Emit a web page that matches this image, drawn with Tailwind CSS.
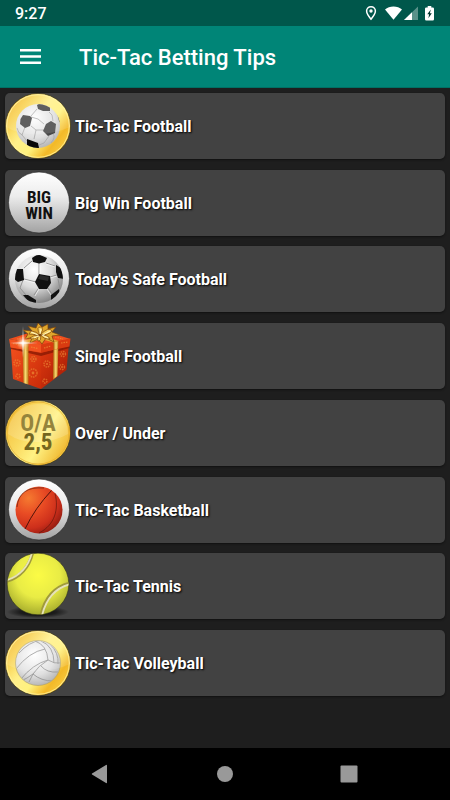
<!DOCTYPE html>
<html lang="en">
<head>
<meta charset="utf-8">
<meta name="viewport" content="width=device-width, initial-scale=1">
<title>Tic-Tac Betting Tips</title>
<script src="https://cdn.jsdelivr.net/npm/@tailwindcss/browser@4"></script>
</head>
<body class="flex min-h-screen flex-col bg-[#1e1e1e] font-['Roboto','Liberation_Sans',sans-serif] text-white">

<!-- Shared gradients and clips -->
<svg class="absolute size-0" aria-hidden="true">
  <defs>
    <linearGradient id="gold" x1="0" y1="0.1" x2="1" y2="0.9">
      <stop offset="0" stop-color="#f0b52c"/><stop offset=".2" stop-color="#f8cf4c"/><stop offset=".42" stop-color="#fff08a"/><stop offset=".6" stop-color="#fff27e"/><stop offset=".78" stop-color="#f3b928"/><stop offset="1" stop-color="#fbd550"/>
    </linearGradient>
    <linearGradient id="goldface" x1="0" y1="0.2" x2="1" y2="0.8">
      <stop offset="0" stop-color="#f3bf3a"/><stop offset=".35" stop-color="#fadb62"/><stop offset=".6" stop-color="#fff284"/><stop offset="1" stop-color="#eeb024"/>
    </linearGradient>
    <linearGradient id="silver" x1="0" y1="0" x2="0" y2="1">
      <stop offset="0" stop-color="#fff"/><stop offset=".4" stop-color="#ececec"/><stop offset="1" stop-color="#a2a2a2"/>
    </linearGradient>
    <radialGradient id="ball" cx=".4" cy=".3" r=".75">
      <stop offset="0" stop-color="#fff"/><stop offset=".5" stop-color="#dcdcdc"/><stop offset="1" stop-color="#7b7b7b"/>
    </radialGradient>
    <radialGradient id="paleball" cx=".42" cy=".32" r=".75">
      <stop offset="0" stop-color="#fff"/><stop offset=".6" stop-color="#e0e0e0"/><stop offset="1" stop-color="#acacac"/>
    </radialGradient>
    <radialGradient id="orange" cx=".28" cy=".25" r=".85">
      <stop offset="0" stop-color="#f57a30"/><stop offset=".4" stop-color="#e84b24"/><stop offset=".75" stop-color="#cd2f1b"/><stop offset="1" stop-color="#8e1a10"/>
    </radialGradient>
    <radialGradient id="lime" cx=".5" cy=".36" r=".65">
      <stop offset="0" stop-color="#fbfb45"/><stop offset=".55" stop-color="#e9ec45"/><stop offset="1" stop-color="#a5ab2c"/>
    </radialGradient>
    <radialGradient id="groundshade">
      <stop offset="0" stop-color="#000" stop-opacity=".9"/><stop offset=".6" stop-color="#000" stop-opacity=".55"/><stop offset="1" stop-color="#000" stop-opacity="0"/>
    </radialGradient>
    <linearGradient id="boxleft" x1="0" y1="0" x2="1" y2="1">
      <stop offset="0" stop-color="#f4511e"/><stop offset="1" stop-color="#c92b08"/>
    </linearGradient>
    <linearGradient id="boxright" x1="0" y1="0" x2="1" y2="1">
      <stop offset="0" stop-color="#e23a10"/><stop offset="1" stop-color="#a01a04"/>
    </linearGradient>
    <linearGradient id="ribbon" x1="0" y1="0" x2="1" y2="0">
      <stop offset="0" stop-color="#b06c10"/><stop offset=".5" stop-color="#f8d870"/><stop offset="1" stop-color="#b87814"/>
    </linearGradient>
    <radialGradient id="glow">
      <stop offset="0" stop-color="#fff"/><stop offset=".35" stop-color="#ffd9b8" stop-opacity=".8"/><stop offset="1" stop-color="#ff9a60" stop-opacity="0"/>
    </radialGradient>
    <clipPath id="clip22"><circle cx="33" cy="33" r="22"/></clipPath>
    <clipPath id="clip24"><circle cx="34" cy="33" r="24"/></clipPath>
    <clipPath id="cliptennis"><circle cx="33" cy="31" r="30.5"/></clipPath>
  </defs>
</svg>

<header>
  <div class="flex h-[26px] items-center justify-between bg-[#00574b] pr-4 pl-[15px]">
    <time class="pt-[2px] text-[16px] leading-6 font-medium">9:27</time>
    <div class="flex items-center">
      <svg class="mr-2 h-4 w-3" viewBox="0 0 12 16" aria-hidden="true"><path d="M6 1.700C3.400 1.700 1.600 3.600 1.600 6.100C1.600 9 6 14.200 6 14.200S10.400 9 10.400 6.100C10.400 3.600 8.600 1.700 6 1.700Z" fill="none" stroke="#fff" stroke-width="1.500"/><circle cx="6" cy="6" r="1.700" fill="#fff"/></svg>
      <svg class="mr-[2px] h-4 w-[17px]" viewBox="0 0 17 16" aria-hidden="true"><path d="M0 4.600C2.300 2.700 5.200 1.600 8.500 1.600S14.700 2.700 17 4.600L8.500 14.800Z" fill="#fff"/></svg>
      <svg class="mr-[7px] h-4 w-[14px]" viewBox="0 0 14 16" aria-hidden="true"><path d="M14 1.500V15H0Z" fill="#fff" fill-opacity=".35"/><path d="M8 7.300V15H0Z" fill="#fff"/></svg>
      <svg class="h-4 w-[9px]" viewBox="0 0 9 16" aria-hidden="true"><path d="M2.700 1h3.600v1.500h1.500Q9 2.500 9 3.700V14.200Q9 15.500 7.800 15.500H1.200Q0 15.500 0 14.200V3.700Q0 2.500 1.200 2.500H2.700Z" fill="#fff"/><path d="M5.800 4.500L2.300 9.300H4.100L3.400 13.200L6.800 8.300H4.900Z" fill="#00352e"/></svg>
    </div>
  </div>
  <div class="flex h-[62px] items-center gap-[35px] border-b border-[#007165] bg-[#008577] pl-[17px]">
    <button type="button" aria-label="Open menu" class="size-[27px]">
      <svg class="size-[27px]" viewBox="0 0 27 27" fill="#fff" aria-hidden="true"><path d="M3 6h21v2.500H3zM3 12.200h21v2.500H3zM3 18.400h21v2.500H3z"/></svg>
    </button>
    <h1 class="pt-[2px] text-[22px] leading-8 font-medium">Tic-Tac Betting Tips</h1>
  </div>
</header>

<main class="flex flex-1 flex-col px-[5px] pt-[5px] pb-[52px]">
  <ul class="flex flex-1 flex-col justify-between gap-2 text-[16px] leading-6 font-bold [text-shadow:1px_1px_2px_#000]">
    <li><a href="#tic-tac-football" class="flex items-center gap-1 rounded-[5px] bg-[#424242] shadow-[0_1px_2px_#111]">
      <svg class="size-[66px] shrink-0" viewBox="0 0 66 66" aria-hidden="true">
        <circle cx="33" cy="33" r="32.600" fill="url(#gold)" stroke="#3a3520" stroke-width=".7"/>
        <circle cx="33" cy="33" r="31.300" fill="none" stroke="#fff3a0" stroke-width=".8"/>
        <circle cx="33" cy="33" r="22" fill="url(#paleball)"/>
        <g clip-path="url(#clip22)">
          <path d="M26 23L32 16M44 19L47 22L48 28M26 33L31 37L39 37M39 31L33 26L26 24M31 37L29 46M44 43L39 50L34 52M20 34L17 42L22 48M17 42Q13 40 12 35M48 41Q51 44 46 50" fill="none" stroke="#a6a6a6" stroke-width=".8"/>
          <g fill="#484848"><path d="M32 12L36 10L45 13L45 18L38 18L33 16Z"/><path d="M18 22L25 23L27 25L25 33L20 35L15 31L15.500 26Z"/><path d="M41 31L46 28L51 31L50 40L43 43L38 38Z"/><path d="M52 20L57 26L56 31L54 28Z"/></g>
          <path d="M22 46L33 50L34 55L29 56L22 53Z" fill="#080808"/>
        </g>
        <path d="M1 34Q15 42 33 41.500Q52 40 65 34V33A32 32 0 0 0 1 33Z" fill="#fff" opacity=".13"/>
      </svg>
      <span class="pt-[2px]">Tic-Tac Football</span></a></li>

    <li><a href="#big-win-football" class="flex items-center gap-1 rounded-[5px] bg-[#424242] shadow-[0_1px_2px_#111]">
      <svg class="size-[66px] shrink-0" viewBox="0 0 66 66" aria-hidden="true">
        <circle cx="34" cy="32.500" r="30.500" fill="url(#silver)" stroke="#222" stroke-width=".6"/>
        <g class="text-[17px] font-bold [text-shadow:none]" font-family="'Roboto Condensed',Roboto,sans-serif" text-anchor="middle" fill="#111"><text x="34" y="33">BIG</text><text x="34" y="49">WIN</text></g>
      </svg>
      <span class="pt-[2px]">Big Win Football</span></a></li>

    <li><a href="#todays-safe-football" class="flex items-center gap-1 rounded-[5px] bg-[#424242] shadow-[0_1px_2px_#111]">
      <svg class="size-[66px] shrink-0" viewBox="0 0 66 66" aria-hidden="true">
        <circle cx="34" cy="32.500" r="30.500" fill="url(#silver)" stroke="#222" stroke-width=".6"/>
        <circle cx="34" cy="33" r="24" fill="url(#ball)"/>
        <g clip-path="url(#clip24)">
          <path d="M27 15L19 22M41 17L50 20M34 28L34 17M31 36L19 33M45 31L52 29M43 42L47 48M33 43L29 49M18 34L15 42L21 49M53 33L55 43" fill="none" stroke="#8d8d8d" stroke-width=".9"/>
          <path d="M28 15.500L20 22.500M41 18L50 21M35 28L35 18M31 37L19 34M45 32L52 30M42 43L46 49M34 43L30 50" fill="none" stroke="#fff" stroke-width=".6"/>
          <g fill="#111"><path d="M27 12L33 8L42 12L40 16L34 17.500L28 16Z"/><path d="M11 23L18 23L19 34L13 36L9 33Z"/><path d="M34 28L45 30L46 37L42 43L34 43L30 36Z"/><path d="M51 19L56 22L59 33L53 32L51 26Z"/><path d="M18 49L23 49L31 54L31 58L24 56Z"/><path d="M46 49L54 43L55 49L46 55Z"/></g>
          <path d="M35 29L44 31L43 35L33 33Z" fill="#444" opacity=".5"/>
        </g>
      </svg>
      <span class="pt-[2px]">Today's Safe Football</span></a></li>

    <li><a href="#single-football" class="flex items-center gap-1 rounded-[5px] bg-[#424242] shadow-[0_1px_2px_#111]">
      <svg class="size-[66px] shrink-0" viewBox="0 0 66 66" aria-hidden="true">
        <path d="M5.500 20L36 27V66L8 56Z" fill="url(#boxleft)"/><path d="M36 27L64 20L61.500 47L36 66Z" fill="url(#boxright)"/>
        <g fill="none" stroke="#ee8a34" stroke-width="1.500" stroke-dasharray="1.500 .8" opacity=".6"><circle cx="12" cy="40" r="3"/><circle cx="28.500" cy="36" r="2.500"/><circle cx="28" cy="50" r="4"/><circle cx="13" cy="53" r="2"/><circle cx="42" cy="41" r="3"/><circle cx="58" cy="31" r="2.500"/><circle cx="40" cy="58" r="2"/><circle cx="57" cy="44" r="2.500"/></g>
        <g fill="#ee8a34" opacity=".7"><circle cx="12" cy="40" r="1"/><circle cx="28.500" cy="36" r="1"/><circle cx="28" cy="50" r="1.400"/><circle cx="42" cy="41" r="1"/><circle cx="58" cy="31" r="1"/><circle cx="57" cy="44" r="1"/></g>
        <path d="M5.500 24L36 30L64.500 22.500V25L36 33L6 26Z" fill="#7d1602" opacity=".7"/>
        <path d="M17.500 22L23.500 23V61.500L18.500 60Z" fill="url(#ribbon)"/><path d="M48.500 22L53.500 20.500L52.500 53L48 56.500Z" fill="url(#ribbon)"/>
        <path d="M4 16L27 9H43L65.500 16L36 22Z" fill="#ef4e1d"/>
        <path d="M4 16L36 21.500V29.500L5.500 24.500Z" fill="#f2521f"/><path d="M36 21.500L65.500 15.500L64.500 23.500L36 29.500Z" fill="#d93a10"/>
        <g fill="none" stroke="#f09038" stroke-width="1.200" stroke-dasharray="1.500 1" opacity=".7"><path d="M8 20.500L15 22M26 24L33 25.500M39 25L46 23M56 20L63 19M12 16L20 14M50 14L58 16"/></g>
        <path d="M17 18.500L23.500 19.500V27.500L17.500 26.500Z" fill="url(#ribbon)"/><path d="M48.500 19L53.500 18L53 25.500L48.500 27Z" fill="url(#ribbon)"/>
        <path d="M17 18.500L30 14L36 16L23.500 20ZM36 16L42 14L53.500 18L48.500 19.500Z" fill="#e0a934"/>
        <g fill="#dfa62c" stroke="#78400a" stroke-width=".7" stroke-linejoin="round">
          <path d="M35 13L20 16L23 11L18 7L27 8L23 3L31 5L33 0L37 4L43 1L43 6L51 4L47 9L55 12L47 13L49 19L41 15L37 21L33 16L25 20L27 15Z"/>
          <path d="M35 12L24 11Q26 5 35 12Q30 3 37 4Q39 7 35 12Q44 3 47 8Q44 12 35 12Q44 12 45 16Q40 17 35 12Q37 18 33 18Q31 15 35 12Q28 18 25 15Q28 12 35 12Z" fill="#f8d262"/>
        </g>
        <path d="M26 9L33 12M36 6L35 11M45 8L38 12M43 15L37 12M29 15L34 13" stroke="#fff6c0" stroke-width="1"/>
        <circle cx="18" cy="20" r="7" fill="url(#glow)"/><path d="M18 3L18.700 19.300L33 20L18.700 20.700L18 35L17.300 20.700L5 20L17.300 19.300Z" fill="#fff" opacity=".85"/>
      </svg>
      <span class="pt-[2px]">Single Football</span></a></li>

    <li><a href="#over-under" class="flex items-center gap-1 rounded-[5px] bg-[#424242] shadow-[0_1px_2px_#111]">
      <svg class="size-[66px] shrink-0" viewBox="0 0 66 66" aria-hidden="true">
        <circle cx="33" cy="33" r="32.600" fill="url(#gold)" stroke="#3a3520" stroke-width=".7"/>
        <circle cx="33" cy="33" r="31" fill="url(#goldface)" stroke="#e5ae35" stroke-width=".8"/>
        <path d="M3 34Q16 43 33 42Q51 41 63 34A30 30 0 0 0 3 34Z" fill="#fff" opacity=".16"/>
        <g class="text-[23px] font-bold [text-shadow:none]" font-family="'Roboto Condensed',Roboto,sans-serif" text-anchor="middle"><text x="33" y="31" fill="#94843c">O/A</text><text x="33" y="50" fill="#74661f">2,5</text></g>
      </svg>
      <span class="pt-[2px]">Over / Under</span></a></li>

    <li><a href="#tic-tac-basketball" class="flex items-center gap-1 rounded-[5px] bg-[#424242] shadow-[0_1px_2px_#111]">
      <svg class="size-[66px] shrink-0" viewBox="0 0 66 66" aria-hidden="true">
        <circle cx="34" cy="32.500" r="30.500" fill="url(#silver)" stroke="#222" stroke-width=".6"/>
        <circle cx="34" cy="33" r="23.500" fill="url(#orange)"/>
        <path d="M46.500 13.500Q30 31 20 52" fill="none" stroke="#3d0d08" stroke-width=".9"/><path d="M50 16.500C54 32 50 48 34 56M39 11Q14 9 12 30" fill="none" stroke="#4b1009" stroke-width=".7" opacity=".8"/>
      </svg>
      <span class="pt-[2px]">Tic-Tac Basketball</span></a></li>

    <li><a href="#tic-tac-tennis" class="flex items-center gap-1 rounded-[5px] bg-[#424242] shadow-[0_1px_2px_#111]">
      <svg class="size-[66px] shrink-0" viewBox="0 0 66 66" aria-hidden="true">
        <ellipse cx="33" cy="59" rx="31" ry="6" fill="url(#groundshade)"/>
        <circle cx="33" cy="31" r="30.800" fill="url(#lime)" stroke="#2b2e14" stroke-width=".5"/>
        <g clip-path="url(#cliptennis)" fill="none"><path d="M27.500 0Q22 22 1 28.500M66 30Q42 35 36 62.500" stroke="#a09a3c" stroke-width="3.200"/><path d="M26.800 0Q21.500 21 1 27.500M66 31Q43.500 36 37 62.500" stroke="#e6e2ba" stroke-width="1.800"/></g>
      </svg>
      <span class="pt-[2px]">Tic-Tac Tennis</span></a></li>

    <li><a href="#tic-tac-volleyball" class="flex items-center gap-1 rounded-[5px] bg-[#424242] shadow-[0_1px_2px_#111]">
      <svg class="size-[66px] shrink-0" viewBox="0 0 66 66" aria-hidden="true">
        <circle cx="33" cy="33" r="32.600" fill="url(#gold)" stroke="#3a3520" stroke-width=".7"/>
        <circle cx="33" cy="33" r="31.300" fill="none" stroke="#fff3a0" stroke-width=".8"/>
        <circle cx="33" cy="33" r="22.500" fill="url(#paleball)" stroke="#a89a66" stroke-width=".6"/>
        <g clip-path="url(#clip22)" fill="none" stroke="#999" stroke-width=".9"><path d="M43 30Q28 34 15 50M40 19Q24 22 11 39M36 10Q24 12 14 23M30 11Q42 15 43 30Q49 34 56 33M36 11Q49 16 49 33M45 14Q54 23 53 34M43 30Q33 36 28 44L24 52M28 44Q36 51 48 51M36 36Q42 43 53 42M28 44Q21 49 18 50"/></g>
        <path d="M1 34Q15 42 33 41.500Q52 40 65 34V33A32 32 0 0 0 1 33Z" fill="#fff" opacity=".13"/>
      </svg>
      <span class="pt-[2px]">Tic-Tac Volleyball</span></a></li>
  </ul>
</main>

<nav aria-label="System" class="flex h-[52px] items-center justify-around bg-black px-[39px]">
  <button type="button" aria-label="Back"><svg class="size-5" viewBox="0 0 20 20" fill="#999" aria-hidden="true"><path d="M16 1.500V18.500Q16 19.500 15 19L1 10.500Q.500 10 1 9.500L15 1Q16 .500 16 1.500Z"/></svg></button>
  <button type="button" aria-label="Home"><svg class="size-5" viewBox="0 0 20 20" fill="#999" aria-hidden="true"><circle cx="10" cy="10" r="8"/></svg></button>
  <button type="button" aria-label="Recent apps"><svg class="size-5" viewBox="0 0 20 20" fill="#999" aria-hidden="true"><rect x="1.500" y="1.500" width="17" height="17" rx="1"/></svg></button>
</nav>
</body>
</html>
